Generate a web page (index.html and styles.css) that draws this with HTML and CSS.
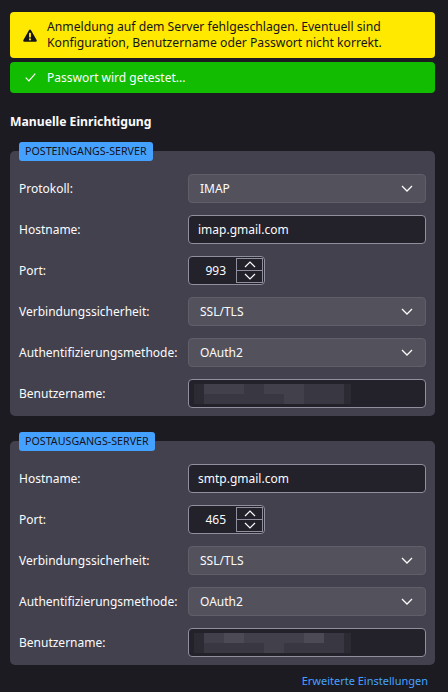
FILE: index.html
```html
<!DOCTYPE html>
<html>

<head>
    <link rel="stylesheet" href="styles.css">
</head>

<body>
    <div class="notice notice-warning">
        <svg class="notice-icon" width="14" height="13" viewBox="0 0 16 15">
            <path d="M8 0.6c.5 0 .9.3 1.2.8l6.4 11.4c.5.9-.1 2-1.2 2H1.6c-1 0-1.700-1.1-1.2-2L6.8 1.4c.3-.5.7-.8 1.2-.8z" fill="#15141a"/>
            <rect x="6.9" y="4.2" width="2.2" height="5.6" rx="0.7" fill="#ffe900"/>
            <circle cx="8" cy="12" r="1.2" fill="#ffe900"/>
        </svg>
        <span>Anmeldung auf dem Server fehlgeschlagen. Eventuell sind Konfiguration, Benutzername oder Passwort nicht korrekt.</span>
    </div>
    <div class="notice notice-success">
        <svg class="notice-icon" width="11" height="9" viewBox="0 0 11 9">
            <path d="M0.7 4.6l3.2 3.3 6.4-7.2" fill="none" stroke="#fff" stroke-width="1.2"/>
        </svg>
        <span>Passwort wird getestet...</span>
    </div>

    <h2 class="title">Manuelle Einrichtigung</h2>

    <div class="group">
        <div class="legend">POSTEINGANGS-SERVER</div>
        <div class="box">
            <div class="row">
                <label>Protokoll:</label>
                <div class="select">IMAP
                    <svg class="chevron" width="12" height="7" viewBox="0 0 12 7"><path d="M1 1l5 5 5-5" fill="none" stroke="#fbfbfe" stroke-width="1.3"/></svg>
                </div>
            </div>
            <div class="row">
                <label>Hostname:</label>
                <div class="input">imap.gmail.com</div>
            </div>
            <div class="row">
                <label>Port:</label>
                <div class="input port">
                    <span class="port-value">993</span>
                    <div class="spin">
                        <span class="spin-btn"><svg width="12" height="7" viewBox="0 0 12 7"><path d="M1 6l5-5 5 5" fill="none" stroke="#fbfbfe" stroke-width="1.2"/></svg></span>
                        <span class="spin-btn"><svg width="12" height="7" viewBox="0 0 12 7"><path d="M1 1l5 5 5-5" fill="none" stroke="#fbfbfe" stroke-width="1.2"/></svg></span>
                    </div>
                </div>
            </div>
            <div class="row">
                <label>Verbindungssicherheit:</label>
                <div class="select">SSL/TLS
                    <svg class="chevron" width="12" height="7" viewBox="0 0 12 7"><path d="M1 1l5 5 5-5" fill="none" stroke="#fbfbfe" stroke-width="1.3"/></svg>
                </div>
            </div>
            <div class="row">
                <label>Authentifizierungsmethode:</label>
                <div class="select">OAuth2
                    <svg class="chevron" width="12" height="7" viewBox="0 0 12 7"><path d="M1 1l5 5 5-5" fill="none" stroke="#fbfbfe" stroke-width="1.3"/></svg>
                </div>
            </div>
            <div class="row">
                <label>Benutzername:</label>
                <div class="input">
                    <div class="pixels">
                        <span class="p1"></span><span class="p3"></span><span class="p3"></span><span class="p2"></span><span class="p3"></span><span class="p3"></span><span class="p2"></span><span class="p2"></span><span class="p1"></span>
                        <span class="p1"></span><span class="p2"></span><span class="p2"></span><span class="p2"></span><span class="p2"></span><span class="p3"></span><span class="p2"></span><span class="p2"></span><span class="p1"></span>
                    </div>
                </div>
            </div>
        </div>
    </div>

    <div class="group">
        <div class="legend">POSTAUSGANGS-SERVER</div>
        <div class="box">
            <div class="row">
                <label>Hostname:</label>
                <div class="input">smtp.gmail.com</div>
            </div>
            <div class="row">
                <label>Port:</label>
                <div class="input port">
                    <span class="port-value">465</span>
                    <div class="spin">
                        <span class="spin-btn"><svg width="12" height="7" viewBox="0 0 12 7"><path d="M1 6l5-5 5 5" fill="none" stroke="#fbfbfe" stroke-width="1.2"/></svg></span>
                        <span class="spin-btn"><svg width="12" height="7" viewBox="0 0 12 7"><path d="M1 1l5 5 5-5" fill="none" stroke="#fbfbfe" stroke-width="1.2"/></svg></span>
                    </div>
                </div>
            </div>
            <div class="row">
                <label>Verbindungssicherheit:</label>
                <div class="select">SSL/TLS
                    <svg class="chevron" width="12" height="7" viewBox="0 0 12 7"><path d="M1 1l5 5 5-5" fill="none" stroke="#fbfbfe" stroke-width="1.3"/></svg>
                </div>
            </div>
            <div class="row">
                <label>Authentifizierungsmethode:</label>
                <div class="select">OAuth2
                    <svg class="chevron" width="12" height="7" viewBox="0 0 12 7"><path d="M1 1l5 5 5-5" fill="none" stroke="#fbfbfe" stroke-width="1.3"/></svg>
                </div>
            </div>
            <div class="row">
                <label>Benutzername:</label>
                <div class="input">
                    <div class="pixels">
                        <span class="p1"></span><span class="p3"></span><span class="p4"></span><span class="p3"></span><span class="p3"></span><span class="p3"></span><span class="p4"></span><span class="p2"></span><span class="p1"></span>
                        <span class="p1"></span><span class="p2"></span><span class="p2"></span><span class="p2"></span><span class="p3"></span><span class="p2"></span><span class="p2"></span><span class="p2"></span><span class="p1"></span>
                    </div>
                </div>
            </div>
        </div>
    </div>

    <div class="footer">
        <a class="link" href="#">Erweiterte Einstellungen</a>
    </div>
</body>

</html>
```

FILE: styles.css
```css
* {
    box-sizing: border-box;
}

body {
    margin: 0;
    padding: 12px 13px 0 10px;
    background-color: #1c1b22;
    color: #fbfbfe;
    font-family: "Noto Sans", "Open Sans", sans-serif;
    font-size: 12px;
    line-height: 16px;
}

/* Notification bars */
.notice {
    display: flex;
    align-items: center;
    border-radius: 4px;
    padding: 7px 10px 7px 13px;
}

.notice-icon {
    flex: none;
    margin-right: 10px;
}

.notice-warning {
    background-color: #ffe900;
    color: #15141a;
    font-size: 12.2px;
}

.notice-success {
    margin-top: 4px;
    height: 31px;
    padding-left: 15px;
    background-color: #12bc00;
    color: #fbfbfe;
}

.notice-success .notice-icon {
    margin-right: 11px;
}

.title {
    margin: 20px 0 0;
    font-size: 12.2px;
    line-height: 18px;
    font-weight: bold;
}

/* Server groups */
.group {
    margin-top: 11px;
}

.group + .group {
    margin-top: 16px;
}

.legend {
    position: relative;
    z-index: 1;
    display: inline-block;
    margin-left: 9px;
    padding: 0 6px;
    height: 19px;
    line-height: 19px;
    border-radius: 3px;
    background-color: #45a1ff;
    color: #15141a;
    font-size: 10.7px;
}

.box {
    margin-top: -10px;
    padding: 23px 9px 8px 9px;
    border-radius: 5px;
    background-color: #42414d;
    display: flex;
    flex-direction: column;
    gap: 12px;
}

.row {
    display: grid;
    grid-template-columns: 169px 1fr;
    align-items: center;
}

.select,
.input {
    height: 29px;
    border-radius: 4px;
    display: flex;
    align-items: center;
}

.select {
    padding: 0 12px 0 11px;
    background-color: #53525c;
    border: 1px solid #5f5e69;
}

.chevron {
    margin-left: auto;
}

.input {
    padding: 0 9px;
    background-color: #23222b;
    border: 1px solid #8f8f9d;
}

.port {
    width: 77px;
    padding: 0 1px 0 0;
}

.port-value {
    flex: 1;
    text-align: right;
    padding-right: 10px;
}

.spin {
    display: flex;
    flex-direction: column;
    width: 27px;
    height: 25px;
    border: 1px solid #8f8f9d;
}

.spin-btn {
    flex: 1;
    display: flex;
    align-items: center;
    justify-content: center;
}

.spin-btn + .spin-btn {
    border-top: 1px solid #8f8f9d;
}

/* Blurred account name */
.pixels {
    display: grid;
    grid-template-columns: 10px 20px 20px 20px 20px 20px 20px 20px 7px;
    grid-template-rows: 10px 10px;
    margin-left: -4px;
}

.p1 {
    background-color: #2c2b34;
}

.p2 {
    background-color: #393842;
}

.p3 {
    background-color: #42414b;
}

.p4 {
    background-color: #4c4b55;
}

.footer {
    display: flex;
    justify-content: flex-end;
    padding: 8px 7px 0 0;
}

.link {
    color: #45a1ff;
    text-decoration: none;
    font-size: 11px;
}
```
